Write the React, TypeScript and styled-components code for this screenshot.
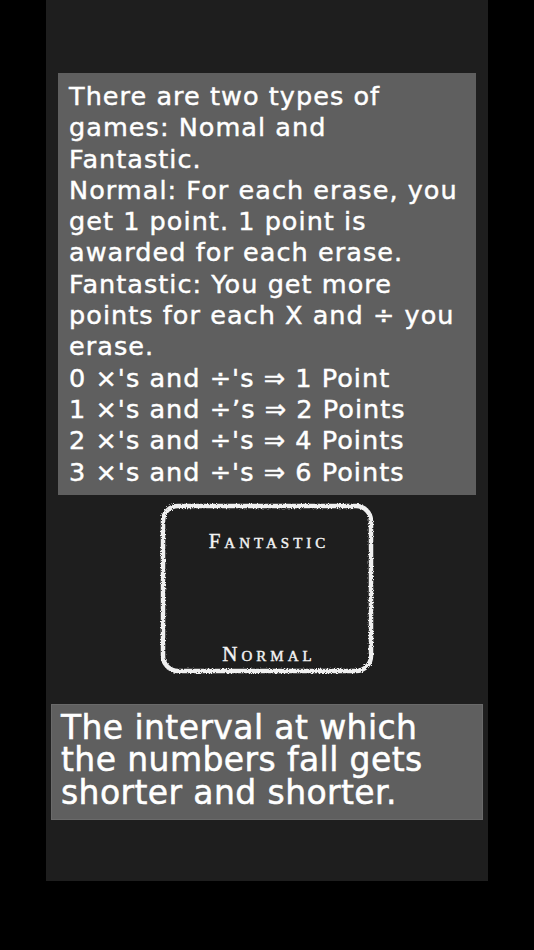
import styled, { createGlobalStyle } from 'styled-components';

const GlobalStyle = createGlobalStyle`
  html, body {
    margin: 0;
    padding: 0;
    background: #000;
  }
`;

const rules = [
  'There are two types of',
  'games: Nomal and',
  'Fantastic.',
  'Normal: For each erase, you',
  'get 1 point. 1 point is',
  'awarded for each erase.',
  'Fantastic: You get more',
  'points for each X and ÷ you',
  'erase.',
  "0 ×'s and ÷'s ⇒ 1 Point",
  '1 ×\'s and ÷’s ⇒ 2 Points',
  "2 ×'s and ÷'s ⇒ 4 Points",
  "3 ×'s and ÷'s ⇒ 6 Points",
];

const hint = ['The interval at which', 'the numbers fall gets', 'shorter and shorter.'];

function ChalkFrame(): JSX.Element {
  return (
    <FrameSvg viewBox="0 0 214 172" preserveAspectRatio="none">
      <defs>
        <filter id="chalk" x="-5%" y="-5%" width="110%" height="110%">
          <feTurbulence type="fractalNoise" baseFrequency="1.2" numOctaves="2" seed="3" result="noise" />
          <feDisplacementMap in="SourceGraphic" in2="noise" scale="3.5" />
        </filter>
      </defs>
      <rect
        x="3"
        y="3"
        width="208"
        height="166"
        rx="15"
        fill="none"
        stroke="#f0f0f0"
        strokeWidth="4.5"
        filter="url(#chalk)"
      />
    </FrameSvg>
  );
}

function App(): JSX.Element {
  return (
    <Screen>
      <GlobalStyle />
      <Panel>
        <RulesBox>
          {rules.map((line) => (
            <Line key={line}>{line}</Line>
          ))}
        </RulesBox>
        <ModeBoard>
          <ChalkFrame />
          <ModeLabel>Fantastic</ModeLabel>
          <ModeLabel>Normal</ModeLabel>
        </ModeBoard>
        <HintBox>
          {hint.map((line) => (
            <Line key={line}>{line}</Line>
          ))}
        </HintBox>
      </Panel>
    </Screen>
  );
}

export default App;

const Screen = styled.div`
  width: 534px;
  height: 950px;
  background: #000;
  overflow: hidden;
`;

const Panel = styled.div`
  display: flex;
  flex-direction: column;
  width: 442px;
  height: 881px;
  margin-left: 46px;
  padding-top: 73px;
  box-sizing: border-box;
  background: #1e1e1e;
`;

const RulesBox = styled.div`
  margin: 0 12px;
  padding: 8px 11px 7px;
  background: #5f5f5f;
  color: #fff;
  font-family: 'DejaVu Sans', 'Liberation Sans', sans-serif;
  font-size: 25.5px;
  line-height: 31.3px;
  letter-spacing: 1.05px;
  -webkit-text-stroke: 0.45px #fff;
`;

const Line = styled.div`
  white-space: nowrap;
`;

const ModeBoard = styled.div`
  position: relative;
  display: flex;
  flex-direction: column;
  align-items: center;
  justify-content: space-between;
  width: 214px;
  height: 171px;
  margin: 8px auto 0;
  padding: 27px 0 9px;
  box-sizing: border-box;
`;

const FrameSvg = styled.svg`
  position: absolute;
  inset: 0;
  width: 100%;
  height: 100%;
`;

const ModeLabel = styled.div`
  position: relative;
  padding-left: 4px;
  color: #f4f4f4;
  font-family: 'Liberation Serif', serif;
  font-variant: small-caps;
  font-size: 21px;
  letter-spacing: 4px;
  line-height: 22px;
  -webkit-text-stroke: 0.4px #f4f4f4;
`;

const HintBox = styled.div`
  margin: 30px 5px 0;
  padding: 7px 9px 10px;
  border: 1px solid #6a6a6a;
  background: #5f5f5f;
  color: #fff;
  font-family: 'DejaVu Sans', 'Liberation Sans', sans-serif;
  font-size: 33px;
  line-height: 32.5px;
  letter-spacing: 0.4px;
  -webkit-text-stroke: 0.5px #fff;
`;
